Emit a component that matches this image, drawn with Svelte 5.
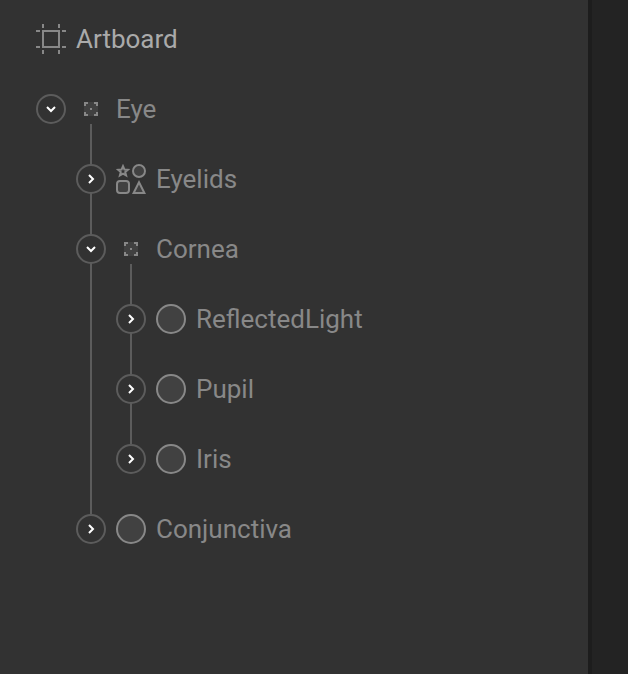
<script>
  const tree = [
    { name: 'Artboard', icon: 'artboard' },
    {
      name: 'Eye', icon: 'group', open: true,
      children: [
        { name: 'Eyelids', icon: 'shapes', open: false },
        {
          name: 'Cornea', icon: 'group', open: true,
          children: [
            { name: 'ReflectedLight', icon: 'ellipse', open: false },
            { name: 'Pupil', icon: 'ellipse', open: false },
            { name: 'Iris', icon: 'ellipse', open: false }
          ]
        },
        { name: 'Conjunctiva', icon: 'ellipse', open: false }
      ]
    }
  ];
</script>

{#snippet icon(kind)}
  <svg class="icon" width="30" height="30" viewBox="0 0 30 30" fill="none" stroke="#888888" stroke-width="2">
    {#if kind === 'artboard'}
      <rect x="7" y="7" width="16" height="16" />
      <path d="M7 0V4M23 0V4M7 26V30M23 26V30M0 7H4M0 23H4M26 7H30M26 23H30" />
    {:else if kind === 'group'}
      <rect x="8" y="8" width="14" height="14" fill="#414141" stroke="none" />
      <path d="M9 12V9H12M18 9H21V12M21 18V21H18M12 21H9V18M14 15H16" />
    {:else if kind === 'shapes'}
      <path d="M7 2.2L8.4 5.5L11.9 5.8L9.2 8.1L10.1 11.5L7 9.7L3.9 11.5L4.8 8.1L2.1 5.8L5.6 5.5Z" />
      <circle cx="23" cy="7" r="6" fill="#414141" />
      <rect x="1" y="17" width="12" height="12" rx="3" fill="#414141" />
      <path d="M23 18.2L28.4 29H17.6Z" fill="#414141" />
    {:else}
      <circle cx="15" cy="15" r="14" fill="#414141" />
    {/if}
  </svg>
{/snippet}

{#snippet branch(nodes)}
  <ul>
    {#each nodes as node}
      <li class:parent={node.children}>
        <div class="row" class:root={node.icon === 'artboard'}>
          {#if node.open !== undefined}
            <svg class="toggle" width="30" height="30" viewBox="0 0 30 30" stroke-width="2">
              <circle cx="15" cy="15" r="14" fill="#323232" stroke="#5c5c5c" />
              <path d={node.open ? 'M11 13L15 17L19 13' : 'M13 11L17 15L13 19'} fill="none" stroke="#fff" />
            </svg>
          {/if}
          {@render icon(node.icon)}
          <span>{node.name}</span>
        </div>
        {#if node.children}
          {@render branch(node.children)}
        {/if}
      </li>
    {/each}
  </ul>
{/snippet}

<div class="app">
  <nav class="panel">
    {@render branch(tree)}
  </nav>
</div>

<style>
  .app {
    display: flex;
    height: 674px;
    background: #232323;
    overflow: hidden;
  }
  .panel {
    box-sizing: border-box;
    width: 592px;
    padding: 4px 0 0 36px;
    background: #323232;
    border-right: 4px solid #1d1d1d;
  }
  ul {
    list-style: none;
    margin: 0;
    padding: 0;
  }
  li > ul {
    padding-left: 40px;
  }
  .parent {
    background: linear-gradient(#5c5c5c, #5c5c5c) no-repeat 54px 50px;
    background-size: 2px calc(100% - 100px);
  }
  .row {
    display: flex;
    align-items: center;
    gap: 10px;
    height: 70px;
    color: #888888;
    font: 26px/30px Roboto, sans-serif;
  }
  .root {
    color: #aaaaaa;
  }
  svg {
    display: block;
    flex: none;
  }
</style>
